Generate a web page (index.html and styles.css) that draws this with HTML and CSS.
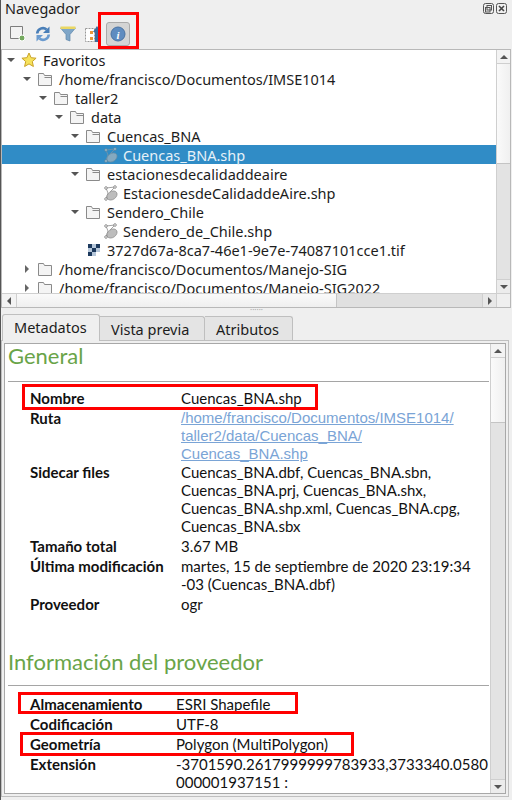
FILE: index.html
```html
<!DOCTYPE html>
<html lang="es">
<head>
<meta charset="utf-8">
<title>Navegador</title>
<link rel="stylesheet" href="styles.css">
</head>
<body>
<svg class="defs" width="0" height="0">
  <defs>
    <symbol id="shp" viewBox="0 0 16 16">
      <path d="M4 3L13 2M4 3l2 5-2 6M13 2L8 7" fill="none" stroke="#9a9a9a" stroke-width=".9"/>
      <ellipse cx="10" cy="10.500" rx="5.500" ry="4" transform="rotate(-35 10 10.500)" fill="#bdbdbd" stroke="#8f8f8f" stroke-width=".7"/>
      <circle cx="4" cy="3" r="1.300" fill="#fff" stroke="#777" stroke-width=".8"/>
      <circle cx="13" cy="2" r="1.300" fill="#fff" stroke="#777" stroke-width=".8"/>
      <circle cx="4" cy="14" r="1.300" fill="#fff" stroke="#777" stroke-width=".8"/>
    </symbol>
    <symbol id="fld" viewBox="0 0 16 16">
      <path d="M1.500 14.500v-12h5l1 2h7v10z" fill="#f4f4f4" stroke="#8a8a8a"/>
      <path d="M7.500 6.500h7" fill="none" stroke="#8a8a8a"/>
    </symbol>
    <symbol id="fldc" viewBox="0 0 16 16">
      <path d="M1.500 14.500v-12h5l1 2h7v10z" fill="#f4f4f4" stroke="#8a8a8a"/>
    </symbol>
  </defs>
</svg>
<div class="app">
  <header class="title">
    <span>Navegador</span>
    <div class="winbtns">
      <svg width="11" height="11" viewBox="0 0 11 11"><rect x=".5" y=".5" width="10" height="10" rx="2" fill="none" stroke="#555"/><rect x="4" y="2.500" width="4.500" height="4.500" fill="none" stroke="#555"/><rect x="2.500" y="4.500" width="4.500" height="4.500" fill="none" stroke="#555"/></svg>
      <svg width="11" height="11" viewBox="0 0 11 11"><rect x=".5" y=".5" width="10" height="10" rx="2" fill="none" stroke="#555"/><path d="M3 3l5 5M8 3l-5 5" stroke="#444" stroke-width="1.600"/></svg>
    </div>
  </header>
  <div class="toolbar">
    <svg class="tool" width="16" height="16" viewBox="0 0 16 16"><path d="M.5 .5h12v12H.5z" fill="#f2f2f2" stroke="#7d7d7d"/><circle cx="12" cy="12" r="3" fill="#74a95f" stroke="#fff"/></svg>
    <svg class="tool" width="16" height="16" viewBox="0 0 16 16"><path d="M2.200 7.500A5.800 5.800 0 0 1 11.600 3.400" fill="none" stroke="#4a7fb8" stroke-width="2.600"/><path d="M14.500 .5v6.500H8z" fill="#4a7fb8"/><path d="M13.800 8.500A5.800 5.800 0 0 1 4.400 12.600" fill="none" stroke="#6b9bcf" stroke-width="2.600"/><path d="M1.500 15.500V9H8z" fill="#6b9bcf"/></svg>
    <svg class="tool" width="16" height="16" viewBox="0 0 16 16"><path d="M.5 2h15L10 8.500V15l-4-1.500V8.500z" fill="#7fa6c8" stroke="#5f87aa" stroke-width=".7"/><rect x=".5" y=".5" width="15" height="2.500" fill="#ead763"/></svg>
    <svg class="tool" width="16" height="16" viewBox="0 0 16 16"><path d="M.5 2.500h9v13h-9z" fill="#fff" stroke="#999" stroke-dasharray="2 1"/><rect x="5" y="5" width="3" height="3" fill="#e8973a"/><rect x="5" y="11" width="3" height="3" fill="#e8973a"/><path d="M12 0l4 6h-2v10h-4V6H8z" fill="#3c6d9c"/></svg>
    <span class="tool-active"><svg width="16" height="16" viewBox="0 0 16 16"><circle cx="8" cy="8" r="7" fill="#5f8cc0" stroke="#4a73a3"/><text x="8" y="12.500" class="info-i">i</text></svg></span>
  </div>
  <section class="tree">
    <div class="tree-view">
      <div class="row d0"><span class="arr down"></span><svg class="ico" viewBox="0 0 16 16"><path d="M8 1l2.100 4.700 5 .5-3.800 3.300 1.100 5L8 11.900 3.600 14.500l1.100-5L.9 6.200l5-.5z" fill="#f6e25c" stroke="#c9a227"/></svg><span>Favoritos</span></div>
      <div class="row d1"><span class="arr down"></span><svg class="ico"><use href="#fld"/></svg><span>/home/francisco/Documentos/IMSE1014</span></div>
      <div class="row d2"><span class="arr down"></span><svg class="ico"><use href="#fld"/></svg><span>taller2</span></div>
      <div class="row d3"><span class="arr down"></span><svg class="ico"><use href="#fld"/></svg><span>data</span></div>
      <div class="row d4"><span class="arr down"></span><svg class="ico"><use href="#fld"/></svg><span>Cuencas_BNA</span></div>
      <div class="row d5 sel"><svg class="ico dim"><use href="#shp"/></svg><span>Cuencas_BNA.shp</span></div>
      <div class="row d4"><span class="arr down"></span><svg class="ico"><use href="#fld"/></svg><span>estacionesdecalidaddeaire</span></div>
      <div class="row d5"><svg class="ico"><use href="#shp"/></svg><span>EstacionesdeCalidaddeAire.shp</span></div>
      <div class="row d4"><span class="arr down"></span><svg class="ico"><use href="#fld"/></svg><span>Sendero_Chile</span></div>
      <div class="row d5"><svg class="ico"><use href="#shp"/></svg><span>Sendero_de_Chile.shp</span></div>
      <div class="row d4 tif"><svg class="ico" viewBox="0 0 12 12"><path d="M0 0h4v4H0zM8 0h4v4H8zM4 4h4v4H4zM0 8h4v4H0z" fill="#1d3a5e"/><path d="M4 0h4v4H4zM0 4h4v4H0zM8 4h4v4H8zM4 8h4v4H4z" fill="#b6c7da"/></svg><span>3727d67a-8ca7-46e1-9e7e-74087101cce1.tif</span></div>
      <div class="row d1"><span class="arr right"></span><svg class="ico"><use href="#fldc"/></svg><span>/home/francisco/Documentos/Manejo-SIG</span></div>
      <div class="row d1"><span class="arr right"></span><svg class="ico"><use href="#fldc"/></svg><span>/home/francisco/Documentos/Manejo-SIG2022</span></div>
    </div>
    <div class="vbar">
      <span class="sb-btn"><span class="tri up"></span></span>
      <span class="sb-thumb tree-thumb"></span>
      <span class="sb-rest"></span>
      <span class="sb-btn"><span class="tri dn"></span></span>
    </div>
    <div class="hbar">
      <span class="hb-btn"><span class="tri lf"></span></span>
      <span class="hb-thumb"></span>
      <span class="hb-rest"></span>
      <span class="hb-btn"><span class="tri rt"></span></span>
    </div>
    <div class="corner"></div>
  </section>
  <div class="splitter"><span>······</span></div>
  <nav class="tabs">
    <span class="tab active">Metadatos</span>
    <span class="tab">Vista previa</span>
    <span class="tab">Atributos</span>
  </nav>
  <section class="pane">
    <div class="doc">
      <div class="doc-scroll">
        <h2 class="first">General</h2>
        <hr>
        <dl class="general">
          <dt>Nombre</dt><dd>Cuencas_BNA.shp</dd>
          <dt>Ruta</dt><dd class="path"><a href="#">/home/francisco/Documentos/IMSE1014/<br>taller2/data/Cuencas_BNA/<br>Cuencas_BNA.shp</a></dd>
          <dt>Sidecar files</dt><dd>Cuencas_BNA.dbf, Cuencas_BNA.sbn,<br>Cuencas_BNA.prj, Cuencas_BNA.shx,<br>Cuencas_BNA.shp.xml, Cuencas_BNA.cpg,<br>Cuencas_BNA.sbx</dd>
          <dt>Tamaño total</dt><dd>3.67 MB</dd>
          <dt>Última modificación</dt><dd>martes, 15 de septiembre de 2020 23:19:34<br>-03 (Cuencas_BNA.dbf)</dd>
          <dt>Proveedor</dt><dd>ogr</dd>
        </dl>
        <h2 class="second">Información del proveedor</h2>
        <hr>
        <dl class="narrow">
          <dt>Almacenamiento</dt><dd>ESRI Shapefile</dd>
          <dt>Codificación</dt><dd>UTF-8</dd>
          <dt>Geometría</dt><dd>Polygon (MultiPolygon)</dd>
          <dt>Extensión</dt><dd>-3701590.2617999999783933,3733340.0580<br>000001937151 :</dd>
        </dl>
      </div>
      <div class="vbar doc-bar">
        <span class="sb-btn"><span class="tri up"></span></span>
        <span class="sb-thumb doc-thumb"></span>
        <span class="sb-rest"></span>
        <span class="sb-btn"><span class="tri dn"></span></span>
      </div>
    </div>
  </section>
  <div class="mark m-tool"></div>
  <div class="mark m-nombre"></div>
  <div class="mark m-alm"></div>
  <div class="mark m-geo"></div>
</div>
</body>
</html>
```

FILE: styles.css
```css
* { box-sizing: border-box; }
html, body { margin: 0; padding: 0; }
body { width: 512px; height: 800px; overflow: hidden; background: #efefef; font-family: "Noto Sans", "Open Sans", sans-serif; color: #1c1c1c; }
.defs { position: absolute; }
.app { position: relative; width: 512px; height: 800px; border-left: 1px solid #555; display: flex; flex-direction: column; }
.title { height: 20px; padding: 0 5px 2px 4px; display: flex; justify-content: space-between; align-items: center; font-size: 14.400px; line-height: 18px; }
.winbtns { display: flex; gap: 2px; margin-top: -1px; }
.toolbar { height: 29px; padding: 0 0 1px 9px; display: flex; align-items: center; gap: 9px; }
.tool { flex: none; }
.tool-active { width: 24px; height: 24px; margin-left: -4px; background: #d4d4d4; border: 1px solid #aaa; border-radius: 3px; display: flex; align-items: center; justify-content: center; }
.info-i { font: italic bold 11px "Liberation Serif", serif; fill: #fff; text-anchor: middle; }
.tree { position: relative; height: 259px; margin-right: 1px; border: 1px solid #b8b8b8; background: #fff; display: grid; grid-template-columns: 1fr 14px; grid-template-rows: 1fr 14px; }
.tree-view { overflow: hidden; }
.row { height: 19px; display: flex; align-items: center; font-size: 14.500px; white-space: nowrap; position: relative; }
.ico { width: 16px; height: 16px; flex: none; margin-right: 6px; }
.d0 { padding-left: 4px; } .d1 { padding-left: 20px; } .d2 { padding-left: 36px; } .d3 { padding-left: 52px; } .d4 { padding-left: 68px; } .d5 { padding-left: 100px; }
.d5 .ico { margin-right: 5px; }
.tif { padding-left: 86px; }
.tif .ico { width: 12px; height: 12px; margin-right: 7px; }
.arr { width: 0; height: 0; margin-right: 7px; flex: none; }
.arr.down { margin-left: 1px; margin-right: 6px; border-left: 4px solid transparent; border-right: 4px solid transparent; border-top: 4px solid #555; }
.arr.right { margin-left: 3px; margin-right: 8px; border-top: 4px solid transparent; border-bottom: 4px solid transparent; border-left: 4px solid #666; }
.sel { background: #308cc6; color: #fff; }
.sel span { color: #e6f1f8; }
.dim { opacity: .6; }
.vbar { display: flex; flex-direction: column; background: #e3e3e3; border-left: 1px solid #cfcfcf; }
.sb-btn { height: 14px; flex: none; background: #f3f3f3; display: flex; align-items: center; justify-content: center; border-bottom: 1px solid #cfcfcf; }
.sb-btn:last-child { border-bottom: 0; border-top: 1px solid #cfcfcf; background: #ececec; }
.sb-thumb { flex: none; background: linear-gradient(90deg, #fafafa, #f0f0f0); border-bottom: 1px solid #c4c4c4; }
.sb-rest { flex: 1; }
.tree-thumb { height: 100px; }
.tri { width: 0; height: 0; }
.tri.up { border-left: 4px solid transparent; border-right: 4px solid transparent; border-bottom: 4px solid #555; }
.tri.dn { border-left: 4px solid transparent; border-right: 4px solid transparent; border-top: 4px solid #555; }
.tri.lf { border-top: 4px solid transparent; border-bottom: 4px solid transparent; border-right: 4px solid #555; }
.tri.rt { border-top: 4px solid transparent; border-bottom: 4px solid transparent; border-left: 4px solid #555; }
.hbar { display: flex; background: #e0e0e0; border-top: 1px solid #cfcfcf; }
.hb-btn { width: 14px; flex: none; display: flex; align-items: center; justify-content: center; background: #f3f3f3; }
.hb-btn:last-child { background: #e8e8e8; border-left: 1px solid #cfcfcf; }
.hb-thumb { width: 321px; flex: none; background: linear-gradient(#fafafa, #efefef); border-left: 1px solid #cfcfcf; border-right: 1px solid #c4c4c4; }
.hb-rest { flex: 1; }
.corner { background: #efefef; border-top: 1px solid #cfcfcf; border-left: 1px solid #cfcfcf; }
.splitter { height: 6px; text-align: center; font-size: 8px; line-height: 4px; color: #aaa; }
.tabs { height: 26px; padding-left: 1px; display: flex; align-items: flex-end; font-size: 14.500px; }
.tab { height: 24px; padding: 0 8px; display: flex; align-items: center; background: #e4e4e4; border: 1px solid #bfbfbf; border-left: 0; border-bottom: 0; border-radius: 0 3px 0 0; }
.tab.active { height: 27px; margin-bottom: -1px; width: 98px; padding: 0 0 2px 11px; border-left: 1px solid #bfbfbf; background: #efefef; border-radius: 3px 3px 0 0; position: relative; z-index: 1; }
.tab:nth-child(2) { width: 105px; padding-left: 11px; }
.tab:nth-child(3) { width: 88px; padding-left: 11px; }
.pane { flex: 1; margin: 0 3px 3px 0; padding: 2px; border: 1px solid #bfbfbf; min-height: 0; }
.doc { height: 100%; display: flex; background: #fff; border: 1px solid #a8a8a8; }
.doc-scroll { flex: 1; padding: 0 1px 0 3px; font-family: Lato, sans-serif; font-size: 15px; line-height: 18px; color: #111; }
.doc-bar { width: 15px; flex: none; }
.doc-thumb { height: 65px; }
h2 { margin: 0; font: 400 22px/28px Lato, sans-serif; color: #69a448; }
h2.first { height: 37px; line-height: 24px; }
h2.second { margin-top: 35px; height: 37px; }
hr { margin: 0; height: 1px; border: 0; background: #a5a5a5; }
dl { margin: 9px 0 0; display: grid; grid-template-columns: 151px 1fr; row-gap: 2px; padding-left: 22px; }
dl.general { margin-top: 7px; }
dl.narrow { grid-template-columns: 146px 1fr; }
dt { font-weight: 700; }
dd { margin: 0; }
dd.path { margin-bottom: -2px; font-family: "Liberation Sans", Arial, sans-serif; }
a { color: #7aa4d6; text-decoration: underline; }
.mark { position: absolute; border: 3px solid #f00; }
.m-tool { left: 97px; top: 12px; width: 41px; height: 37px; }
.m-nombre { left: 21px; top: 384px; width: 296px; height: 26px; }
.m-alm { left: 17px; top: 692px; width: 280px; height: 22px; }
.m-geo { left: 19px; top: 732px; width: 334px; height: 24px; }
```
